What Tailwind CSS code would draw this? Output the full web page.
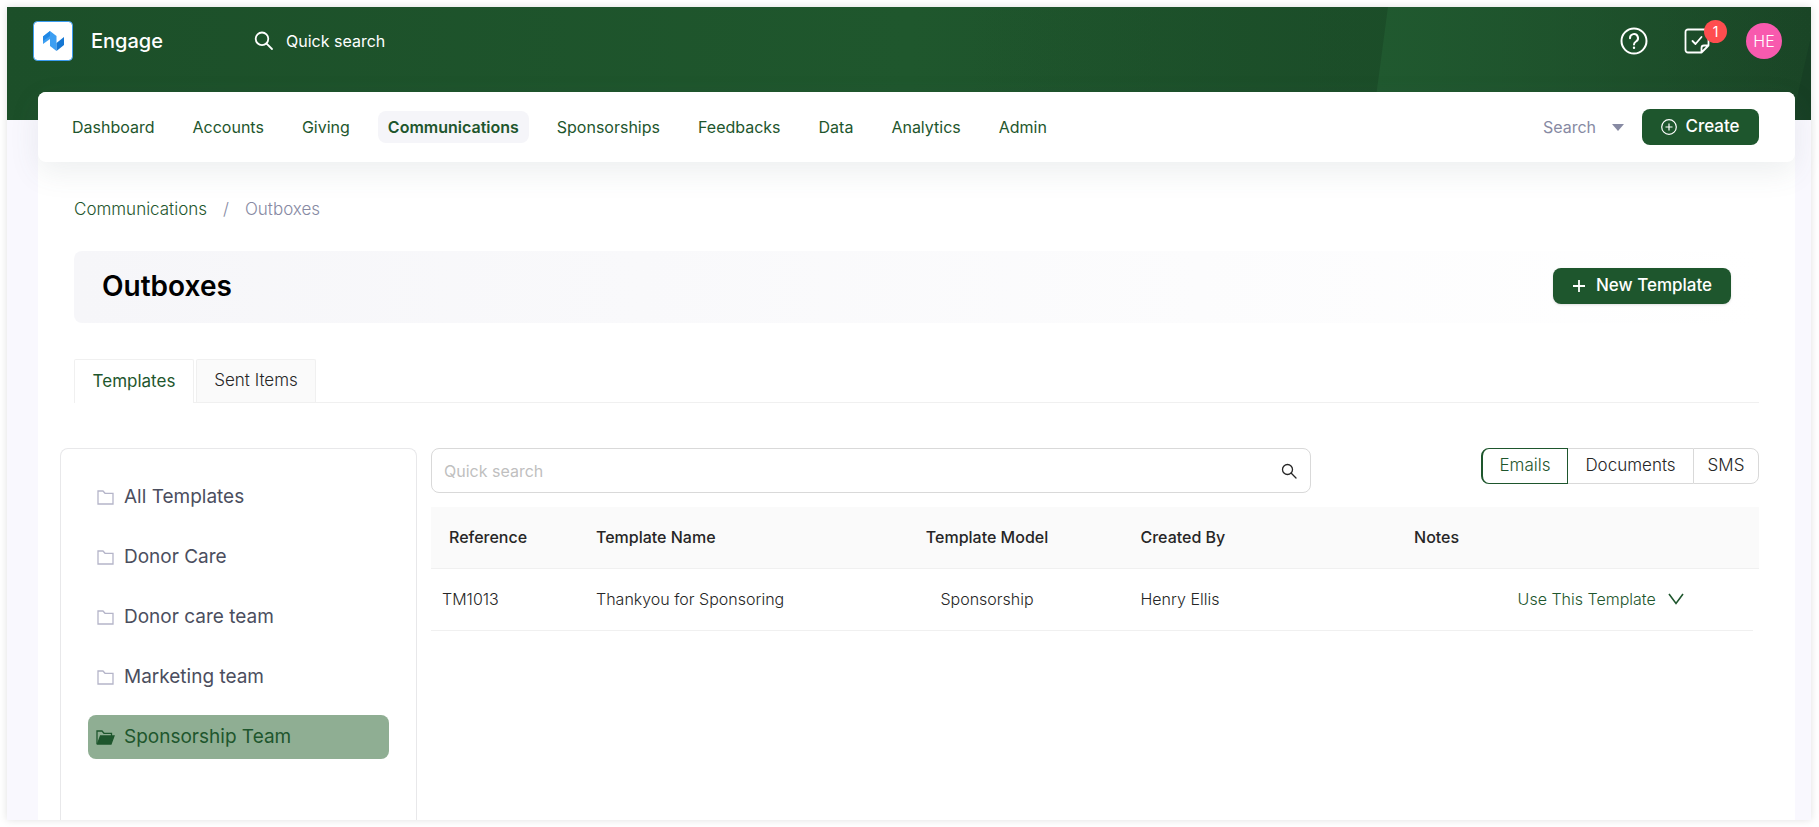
<!DOCTYPE html>
<html lang="en">
<head>
<meta charset="utf-8">
<title>Engage - Outboxes</title>
<script src="https://cdn.jsdelivr.net/npm/@tailwindcss/browser@4"></script>
</head>
<body class="flex h-screen flex-col overflow-hidden bg-white p-[7px] pr-2 font-['Inter',sans-serif] text-base text-[#262626]">
<div class="relative flex min-h-0 flex-1 flex-col bg-[#f9f8fe] shadow-[0_0_8px_rgba(0,0,0,0.12)]">
  <header class="relative h-[113px] shrink-0 bg-linear-to-r from-[#1c4f29] via-[#1f572d] via-50% to-[#1a4526]">
    <svg class="absolute inset-0 h-full w-full" viewBox="0 0 1804 113" preserveAspectRatio="none" aria-hidden="true">
      <defs>
        <linearGradient id="dim"><stop offset="0" stop-color="#1a4d28" stop-opacity="0"/><stop offset="1" stop-color="#1a4d28" stop-opacity=".5"/></linearGradient>
        <linearGradient id="lit"><stop offset="0" stop-color="#20592f"/><stop offset="1" stop-color="#20592f" stop-opacity="0"/></linearGradient>
      </defs>
      <path d="M960 0H1381L1366 113H960Z" fill="url(#dim)"/>
      <path d="M1381 0H1804V113H1366Z" fill="url(#lit)"/>
      <path d="M1804 30V113H1785Z" fill="#143a22" fill-opacity=".5"/>
    </svg>
    <div class="relative flex h-[68px] items-center pr-[29px] pl-[26px]">
      <a href="#" class="flex items-center gap-[18px] text-xl font-medium text-white">
        <svg class="size-10" viewBox="0 0 40 40" aria-hidden="true">
          <rect x=".5" y=".5" width="39" height="39" rx="4" fill="#fff" stroke="#3b9cf0"/>
          <path d="M10 15.500L17 10v8L10 23Z" fill="#3d9ff2"/>
          <path d="M17 10L23.500 15V30L17 25Z" fill="#3d9ff2"/>
          <path d="M10 15.500L17 10v5L10 20Z" fill="#2088e5"/>
          <path d="M23.500 22L31 16v8L23.500 30Z" fill="#1577d3"/>
        </svg>
        Engage
      </a>
      <button class="ml-[91px] flex items-center gap-3 text-base text-white">
        <svg class="size-5" viewBox="0 0 20 20" fill="none" stroke="currentColor" stroke-width="1.800" stroke-linecap="round"><circle cx="8" cy="7.800" r="6.300"/><path d="M12.600 12.600L18 18"/></svg>
        Quick search
      </button>
      <div class="ml-auto flex items-center gap-9">
        <button aria-label="Help" class="text-white">
          <svg class="size-7" viewBox="0 0 28 28" fill="none" stroke="currentColor" stroke-width="2" stroke-linecap="round"><circle cx="14" cy="14" r="12.500"/><path d="M10 11.200a4 4 0 1 1 6 3.300c-1.400.8-2 1.500-2 3"/><circle cx="14" cy="20.800" r=".6" fill="currentColor" stroke-width="1.200"/></svg>
        </button>
        <button aria-label="Tasks, 1 new" class="relative text-white">
          <svg class="size-[26px]" viewBox="0 0 26 26" fill="none" stroke="currentColor" stroke-width="1.800" stroke-linecap="round" stroke-linejoin="round"><path d="M24.500 10v7.500l-7 7H4a2.500 2.500 0 0 1-2.500-2.500V4A2.500 2.500 0 0 1 4 1.500h20.500M17.500 24.500V20a2.500 2.500 0 0 1 2.500-2.500h4.500M8.500 13l3 3 6-7"/></svg>
          <span class="absolute -top-2 left-5 flex size-[23px] items-center justify-center rounded-full bg-[#ff4d4f] text-sm">1</span>
        </button>
        <button aria-label="Account" class="flex size-9 items-center justify-center rounded-full bg-[#f85aae] text-base font-light text-white">HE</button>
      </div>
    </div>
  </header>

  <div class="relative -mt-7 mr-4 ml-[31px] flex min-h-0 flex-1 flex-col rounded-t-lg bg-white">
    <nav class="flex h-[70px] shrink-0 items-center rounded-lg bg-white pr-9 pl-6 shadow-[0_10px_30px_rgba(82,95,105,0.1)] text-[#1e562d]">
      <div class="flex items-center gap-[18px]">
        <a href="#" class="px-[10px]">Dashboard</a>
        <a href="#" class="px-[10px]">Accounts</a>
        <a href="#" class="px-[10px]">Giving</a>
        <a href="#" class="flex h-8 items-center rounded-lg bg-[#f5f5f9] px-[10px] font-semibold" aria-current="page">Communications</a>
        <a href="#" class="px-[10px]">Sponsorships</a>
        <a href="#" class="px-[10px]">Feedbacks</a>
        <a href="#" class="px-[10px]">Data</a>
        <a href="#" class="px-[10px]">Analytics</a>
        <a href="#" class="px-[10px]">Admin</a>
      </div>
      <button class="ml-auto flex items-center gap-4 text-base text-[#878aa3]">Search
        <svg class="h-[7px] w-3" viewBox="0 0 12 7" fill="currentColor"><path d="M0 0h12L6 7Z"/></svg>
      </button>
      <button class="ml-[18px] flex h-9 w-[117px] items-center justify-center gap-2 rounded-lg bg-[#1e562d] text-[17px] font-medium text-white">
        <svg class="size-4" viewBox="0 0 16 16" fill="none" stroke="currentColor" stroke-width="1.200"><circle cx="8" cy="8" r="7.300"/><path d="M8 4.500v7M4.500 8h7"/></svg>
        Create
      </button>
    </nav>

    <main class="flex min-h-0 flex-1 flex-col pr-9 pl-[22px]">
      <nav class="mt-9 ml-[14px] flex h-6 items-center gap-4 text-[17px] font-light" aria-label="Breadcrumb">
        <a href="#" class="text-[#1e562d]">Communications</a>
        <span class="text-[#878aa3]">/</span>
        <span class="text-[#878aa3]">Outboxes</span>
      </nav>

      <div class="mt-[29px] ml-[14px] flex h-[72px] shrink-0 items-center justify-between rounded-lg bg-linear-to-r from-[#f6f6f9] to-white px-7 pb-0.5">
        <h1 class="text-[28px] font-semibold text-black">Outboxes</h1>
        <button class="flex h-9 w-[178px] items-center justify-center gap-[10px] rounded-lg bg-[#1e562d] text-[17px] font-medium text-white shadow-sm">
          <svg class="size-[14px]" viewBox="0 0 14 14" fill="none" stroke="currentColor" stroke-width="1.800"><path d="M7 1v12M1 7h12"/></svg>
          New Template
        </button>
      </div>

      <div role="tablist" class="mt-9 ml-[14px] flex h-11 shrink-0 gap-0.5 border-b border-[#f0f0f0] text-[17px]">
        <button role="tab" aria-selected="true" class="-mb-px w-[120px] rounded-t-xs border border-b-0 border-[#f0f0f0] bg-white text-[#1e562d]">Templates</button>
        <button role="tab" aria-selected="false" class="w-[120px] rounded-t-xs border border-b-0 border-[#f0f0f0] bg-[#fafafa] font-light">Sent Items</button>
      </div>

      <div class="mt-[45px] flex min-h-0 flex-1 gap-[14px]">
        <aside class="flex w-[357px] shrink-0 flex-col gap-4 rounded-t-lg border border-b-0 border-[#e8e8ea] px-[27px] pt-[26px] text-[19px] text-[#4b4e5e]">
          <a href="#" class="flex h-11 items-center gap-[10px] rounded-lg px-[9px]">
            <svg class="size-[17px]" viewBox="0 0 17 17" fill="none" stroke="#b5b5c9" stroke-width="1.300"><path d="M1 2h5l2 2.300h8V15H1Z"/></svg>All Templates</a>
          <a href="#" class="flex h-11 items-center gap-[10px] rounded-lg px-[9px]">
            <svg class="size-[17px]" viewBox="0 0 17 17" fill="none" stroke="#b5b5c9" stroke-width="1.300"><path d="M1 2h5l2 2.300h8V15H1Z"/></svg>Donor Care</a>
          <a href="#" class="flex h-11 items-center gap-[10px] rounded-lg px-[9px]">
            <svg class="size-[17px]" viewBox="0 0 17 17" fill="none" stroke="#b5b5c9" stroke-width="1.300"><path d="M1 2h5l2 2.300h8V15H1Z"/></svg>Donor care team</a>
          <a href="#" class="flex h-11 items-center gap-[10px] rounded-lg px-[9px]">
            <svg class="size-[17px]" viewBox="0 0 17 17" fill="none" stroke="#b5b5c9" stroke-width="1.300"><path d="M1 2h5l2 2.300h8V15H1Z"/></svg>Marketing team</a>
          <a href="#" aria-current="true" class="flex h-11 items-center gap-[9px] rounded-lg bg-[#8fae93] px-2 text-[#1e562d]">
            <svg class="h-[17px] w-[19px]" viewBox="0 0 19 17" fill="none" stroke="currentColor" stroke-width="1.300"><path d="M1 15V2h5l2 2.300h7.500V7"/><path d="M1.500 15L4.500 7H18l-3 8Z" fill="currentColor"/></svg>Sponsorship Team</a>
        </aside>

        <section class="min-w-0 flex-1">
          <div class="flex items-start gap-[170px]">
            <label class="flex h-[45px] min-w-0 flex-1 items-center rounded-lg border border-[#d9d9d9] pr-[13px] pl-3">
              <input type="text" aria-label="Quick search" placeholder="Quick search" class="min-w-0 flex-1 bg-transparent text-base outline-none placeholder:text-[#bfbfbf]">
              <svg class="size-4" viewBox="0 0 16 16" fill="none" stroke="#262626" stroke-width="1.300" stroke-linecap="round"><circle cx="6.500" cy="6.500" r="5"/><path d="M10.300 10.300L15 15"/></svg>
            </label>
            <div class="flex h-9 text-[17px] font-light">
              <button class="w-[87px] rounded-l-lg border border-l-2 border-[#1e562d] text-[#1e562d]">Emails</button>
              <button class="w-[125px] border-y border-[#d9d9d9]">Documents</button>
              <button class="w-[66px] rounded-r-lg border border-[#d9d9d9]">SMS</button>
            </div>
          </div>
          <table class="mt-[14px] w-full table-fixed border-collapse text-left">
            <colgroup><col class="w-[149px]"><col class="w-[20.3%]"><col class="w-[20.7%]"><col class="w-[20.6%]"><col class="w-[7.8%]"><col><col class="w-[6px]"></colgroup>
            <thead>
              <tr class="h-[61px] border-b border-[#f0f0f0] bg-[#fafafa]">
                <th class="pl-[18px] font-medium">Reference</th>
                <th class="px-4 font-medium">Template Name</th>
                <th class="px-2 text-center font-medium">Template Model</th>
                <th class="px-4 font-medium">Created By</th>
                <th class="px-4 font-medium">Notes</th>
                <th colspan="2" aria-label="Actions"></th>
              </tr>
            </thead>
            <tbody>
              <tr class="h-[62px] font-light">
                <td class="border-b border-[#f0f0f0] pl-[11px]">TM1013</td>
                <td class="border-b border-[#f0f0f0] px-4">Thankyou for Sponsoring</td>
                <td class="border-b border-[#f0f0f0] px-4 text-center">Sponsorship</td>
                <td class="border-b border-[#f0f0f0] px-4">Henry Ellis</td>
                <td class="border-b border-[#f0f0f0]"></td>
                <td class="border-b border-[#f0f0f0] px-4"><button class="flex items-center gap-3 text-[#1e562d]">Use This Template
                  <svg class="h-3 w-4" viewBox="0 0 16 12" fill="none" stroke="currentColor" stroke-width="1.600"><path d="M1 1l7 9.500L15 1"/></svg></button></td>
                <td></td>
              </tr>
            </tbody>
          </table>
        </section>
      </div>
    </main>
  </div>
</div>
</body>
</html>
